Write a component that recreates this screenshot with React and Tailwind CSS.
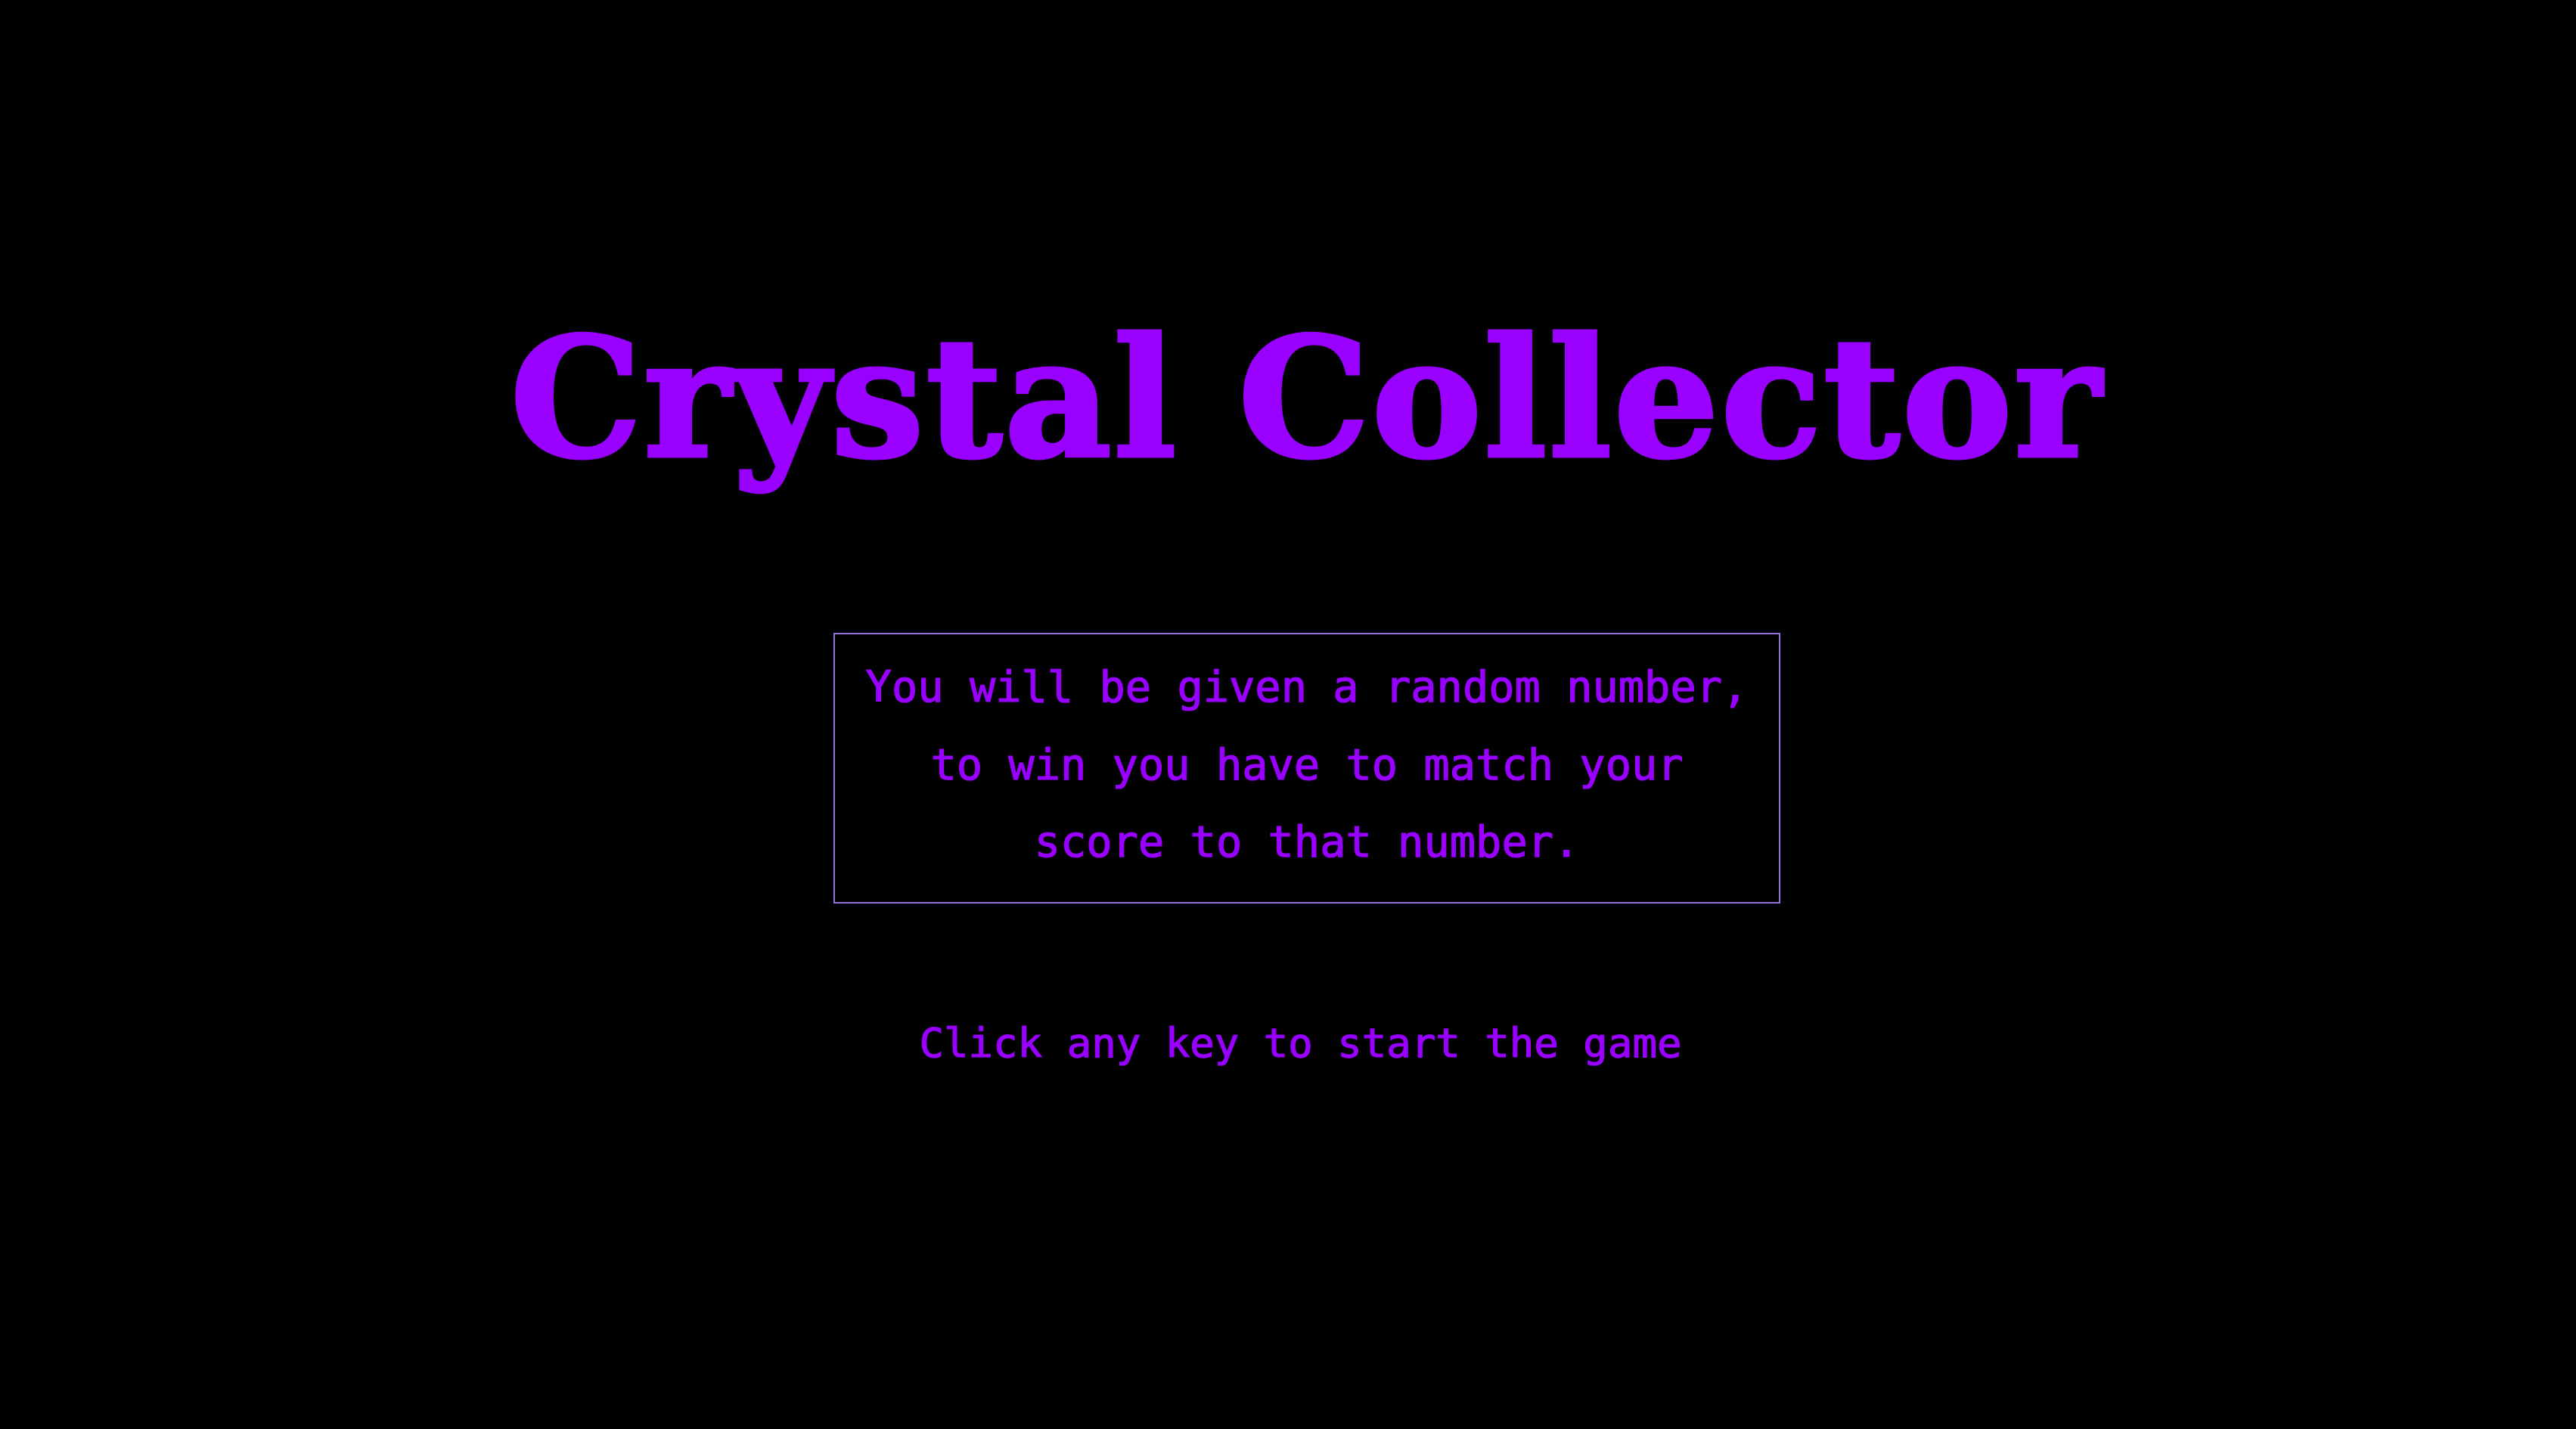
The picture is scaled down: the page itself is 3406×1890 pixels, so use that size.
export default function App() {
  return (
    <div className="min-h-screen w-full bg-black flex flex-col items-center pl-[50px] text-[#9900ff]">
      <h1 className="mt-[415px] text-[218px] leading-[222px] tracking-[3px] font-bold whitespace-nowrap [font-family:'DejaVu_Serif',serif] [-webkit-text-stroke:5px_#9900ff]">
        Crystal Collector
      </h1>
      <div className="mt-[200px] border-2 border-[#9370db] w-[1252px] pt-[18px] pb-[28px] text-center text-[57px] leading-[102.5px] whitespace-nowrap [font-family:'DejaVu_Sans_Mono',monospace] [-webkit-text-stroke:1.2px_#9900ff]">
        You will be given a random number,
        <br />
        to win you have to match your
        <br />
        score to that number.
      </div>
      <p className="mt-[153px] pr-[17px] text-[54px] leading-[64px] whitespace-nowrap [font-family:'DejaVu_Sans_Mono',monospace] [-webkit-text-stroke:1.2px_#9900ff]">
        Click any key to start the game
      </p>
    </div>
  );
}
